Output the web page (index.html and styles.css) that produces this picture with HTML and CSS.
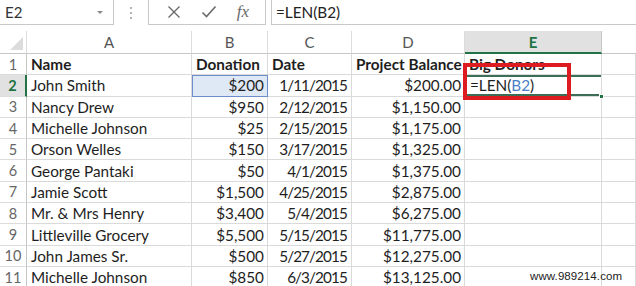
FILE: index.html
```html
<!DOCTYPE html>
<html>
<head>
<meta charset="utf-8">
<link rel="stylesheet" href="styles.css">
</head>
<body>
<div class="page">
  <div class="fbar">
    <div class="namebox"><span class="nb-text">E2</span><span class="caret"></span></div>
    <div class="grip"><svg width="4" height="14" viewBox="0 0 4 14"><circle cx="2" cy="2" r="1" fill="#9a9a9a"/><circle cx="2" cy="7" r="1" fill="#9a9a9a"/><circle cx="2" cy="12" r="1" fill="#9a9a9a"/></svg></div>
    <div class="fxbox">
      <svg class="ic" width="14" height="14" viewBox="0 0 14 14"><path d="M1.5 1.5 L12.5 12.5 M12.5 1.5 L1.5 12.5" stroke="#6a6a6a" stroke-width="1.4" fill="none"/></svg>
      <svg class="ic" width="16" height="14" viewBox="0 0 16 14"><path d="M1.5 7.5 L5.5 11.5 L14.5 1.5" stroke="#6a6a6a" stroke-width="1.6" fill="none"/></svg>
      <span class="fx">fx</span>
    </div>
    <div class="formula">=LEN(B2)</div>
  </div>

  <div class="sheet">
    <div class="ch corner"><span class="tri"></span></div>
    <div class="ch">A</div>
    <div class="ch">B</div>
    <div class="ch">C</div>
    <div class="ch">D</div>
    <div class="ch ch-sel">E</div>
    <div class="ch ch-f"></div>

    <div class="rh">1</div>
    <div class="c b">Name</div>
    <div class="c b">Donation</div>
    <div class="c b">Date</div>
    <div class="c b">Project Balance</div>
    <div class="c b">Big Donors</div>
    <div class="c"></div>

    <div class="rh rh-sel">2</div>
    <div class="c">John Smith</div>
    <div class="c r ref">$200</div>
    <div class="c r d">1/11/2015</div>
    <div class="c r">$200.00</div>
    <div class="c active">=LEN(<span class="refb">B2</span>)<span class="handle"></span></div>
    <div class="c"></div>

    <div class="rh">3</div>
    <div class="c">Nancy Drew</div>
    <div class="c r">$950</div>
    <div class="c r d">2/12/2015</div>
    <div class="c r">$1,150.00</div>
    <div class="c"></div>
    <div class="c"></div>

    <div class="rh">4</div>
    <div class="c">Michelle Johnson</div>
    <div class="c r">$25</div>
    <div class="c r d">2/15/2015</div>
    <div class="c r">$1,175.00</div>
    <div class="c"></div>
    <div class="c"></div>

    <div class="rh">5</div>
    <div class="c">Orson Welles</div>
    <div class="c r">$150</div>
    <div class="c r d">3/17/2015</div>
    <div class="c r">$1,325.00</div>
    <div class="c"></div>
    <div class="c"></div>

    <div class="rh">6</div>
    <div class="c">George Pantaki</div>
    <div class="c r">$50</div>
    <div class="c r d">4/1/2015</div>
    <div class="c r">$1,375.00</div>
    <div class="c"></div>
    <div class="c"></div>

    <div class="rh">7</div>
    <div class="c">Jamie Scott</div>
    <div class="c r">$1,500</div>
    <div class="c r d">4/25/2015</div>
    <div class="c r">$2,875.00</div>
    <div class="c"></div>
    <div class="c"></div>

    <div class="rh">8</div>
    <div class="c">Mr. &amp; Mrs Henry</div>
    <div class="c r">$3,400</div>
    <div class="c r d">5/4/2015</div>
    <div class="c r">$6,275.00</div>
    <div class="c"></div>
    <div class="c"></div>

    <div class="rh">9</div>
    <div class="c">Littleville Grocery</div>
    <div class="c r">$5,500</div>
    <div class="c r d">5/15/2015</div>
    <div class="c r">$11,775.00</div>
    <div class="c"></div>
    <div class="c"></div>

    <div class="rh">10</div>
    <div class="c">John James Sr.</div>
    <div class="c r">$500</div>
    <div class="c r d">5/27/2015</div>
    <div class="c r">$12,275.00</div>
    <div class="c"></div>
    <div class="c"></div>

    <div class="rh">11</div>
    <div class="c">Michelle Johnson</div>
    <div class="c r">$850</div>
    <div class="c r d">6/3/2015</div>
    <div class="c r">$13,125.00</div>
    <div class="c"></div>
    <div class="c"></div>
  </div>

  <div class="redbox"></div>
  <div class="watermark">www.989214.com</div>
</div>
</body>
</html>
```

FILE: styles.css
```css
* { box-sizing: border-box; }
html, body { margin: 0; padding: 0; background: #fff; }
body { width: 636px; height: 286px; overflow: hidden; }

.page {
  position: relative;
  width: 636px;
  height: 286px;
  overflow: hidden;
  font-family: "Lato", "Open Sans", sans-serif;
  color: #222;
}

/* formula bar */
.fbar {
  display: flex;
  height: 25px;
  margin-bottom: 6px;
}
.namebox {
  width: 114px;
  border-right: 1px solid #c8c8c8;
  border-bottom: 1px solid #c8c8c8;
  display: flex;
  align-items: center;
  padding-left: 5px;
  font-size: 15px;
  color: #333;
}
.nb-text { flex: 1; }
.caret {
  width: 0; height: 0;
  border-left: 3px solid transparent;
  border-right: 3px solid transparent;
  border-top: 3px solid #8a8a8a;
  margin-right: 10px;
}
.grip {
  width: 34px;
  display: flex;
  align-items: center;
  justify-content: center;
}
.fxbox {
  width: 118px;
  border: 1px solid #c8c8c8;
  border-top: none;
  display: flex;
  align-items: center;
  justify-content: space-around;
  padding: 0 6px 0 8px;
}
.fx {
  font-family: "Liberation Serif", serif;
  font-style: italic;
  font-size: 17px;
  color: #6a6a6a;
}
.formula {
  flex: 1;
  margin-left: 5px;
  border-left: 1px solid #c8c8c8;
  border-bottom: 1px solid #c8c8c8;
  padding-left: 4px;
  display: flex;
  align-items: center;
  font-size: 15.3px;
  color: #222;
}

/* sheet */
.sheet {
  display: grid;
  grid-template-columns: 27px 165px 76px 84px 113px 137px 34px;
  grid-template-rows: 23px;
  grid-auto-rows: 21.3px;
  font-size: 15.3px;
}
.ch {
  border-right: 1px solid #dcdcdc;
  border-bottom: 1px solid #c6c6c6;
  display: flex;
  align-items: center;
  justify-content: center;
  color: #555;
  font-size: 15px;
}
.corner { position: relative; }
.tri {
  position: absolute;
  right: 3px;
  bottom: 3px;
  width: 0; height: 0;
  border-left: 13px solid transparent;
  border-bottom: 13px solid #dcdcdc;
}
.ch-sel {
  background: #e1e1e1;
  color: #217346;
  font-weight: 700;
  border-bottom: 2px solid #217346;
  border-right-color: #c6c6c6;
}
.ch-f { border-right: none; }

.rh {
  border-right: 1px solid #c6c6c6;
  border-bottom: 1px solid #dcdcdc;
  display: flex;
  align-items: center;
  justify-content: center;
  color: #666;
  font-size: 14.5px;
}
.rh-sel {
  background: #e1e1e1;
  color: #217346;
  font-weight: 700;
  border-right: 2px solid #217346;
}

.c {
  border-right: 1px solid #dadada;
  border-bottom: 1px solid #dadada;
  display: flex;
  align-items: center;
  padding: 0 3px 0 4px;
  white-space: nowrap;
  overflow: visible;
  color: #1e1e1e;
}
.b { font-weight: 700; }
.r { justify-content: flex-end; }
.d { letter-spacing: -0.9px; padding-right: 4px; }

.ref {
  background: #dfe8f5;
  outline: 1.5px solid #6d8ccc;
  outline-offset: -1px;
}
.active {
  position: relative;
  padding-left: 5px;
  box-shadow: inset 0 2px 0 #3c6e57, inset 0 -2px 0 #3c6e57;
}
.refb { color: #4a7fc6; }
.handle {
  position: absolute;
  right: -3px;
  bottom: -3px;
  width: 5px;
  height: 5px;
  background: #217346;
  border: 1px solid #fff;
}

.redbox {
  position: absolute;
  left: 463px;
  top: 63px;
  width: 108px;
  height: 37px;
  border: 4px solid #dd1c22;
}
.watermark {
  position: absolute;
  left: 530px;
  top: 270px;
  font-family: "Liberation Sans", Arial, sans-serif;
  font-size: 11.5px;
  color: #222;
  letter-spacing: 0.1px;
}
```
